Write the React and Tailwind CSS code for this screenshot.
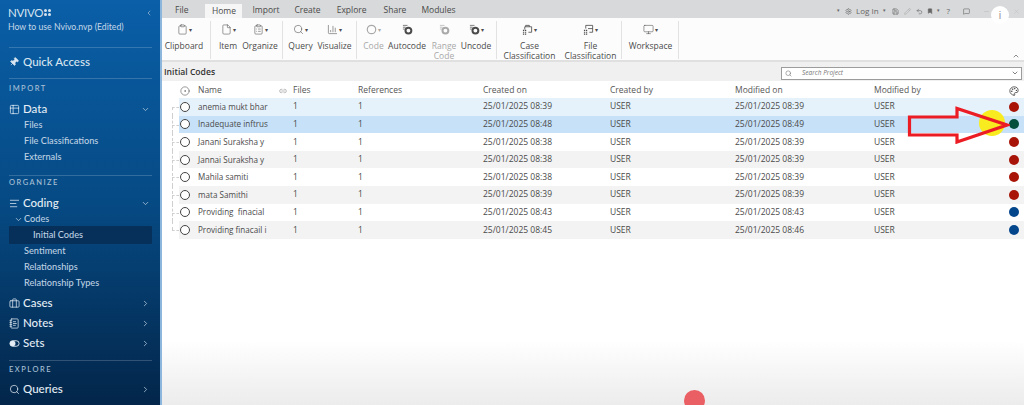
import React from "react";
import { Pin, Table2, ChevronDown, ChevronRight, ChevronLeft, ChevronUp, AlignLeft, Briefcase, NotebookText, Search, Clipboard, File, ClipboardList, BarChart3, Monitor, Palette, Link2, CircleDot, Settings, Save, Pencil, Undo2, Bookmark, MessageSquare, Minus, X } from "lucide-react";

const rows = [
  ["anemia mukt bhar", "25/01/2025 08:39", "25/01/2025 08:39", "bg-[#a81408]", "bg-[#e6f2fb]"],
  ["Inadequate inftrus", "25/01/2025 08:48", "25/01/2025 08:49", "bg-[#05503c]", "bg-[#c6e1f8]"],
  ["Janani Suraksha y", "25/01/2025 08:38", "25/01/2025 08:39", "bg-[#a81408]", "bg-white"],
  ["Jannai Suraksha y", "25/01/2025 08:38", "25/01/2025 08:39", "bg-[#a81408]", "bg-[#f3f3f3]"],
  ["Mahila samiti", "25/01/2025 08:38", "25/01/2025 08:39", "bg-[#a81408]", "bg-white"],
  ["mata Samithi", "25/01/2025 08:39", "25/01/2025 08:39", "bg-[#a81408]", "bg-[#f3f3f3]"],
  ["Providing  finacial", "25/01/2025 08:43", "25/01/2025 08:43", "bg-[#04468c]", "bg-white"],
  ["Providing finacail i", "25/01/2025 08:45", "25/01/2025 08:46", "bg-[#04468c]", "bg-[#f3f3f3]"],
];

const grid = "grid grid-cols-[19px_95px_65px_125px_127px_125px_139px_135px_14px] items-center";

const IconCircle = ({ size = 11 }) => (
  <svg width={size} height={size} viewBox="0 0 12 12" fill="none" stroke="currentColor" strokeWidth="1.3"><circle cx="6" cy="6" r="4.6" /></svg>
);
const IconStack = ({ size = 11 }) => (
  <svg width={size} height={size} viewBox="0 0 12 12" fill="none">
    <path d="M1 1.5H6M1 3.5H4M1 5.5H3" stroke="currentColor" strokeWidth="1" opacity="0.75" />
    <circle cx="7" cy="7.2" r="3.2" stroke="currentColor" strokeWidth="2.2" />
  </svg>
);
const IconCase = ({ size = 12 }) => (
  <svg width={size} height={size} viewBox="0 0 12 12" fill="none" stroke="currentColor" strokeWidth="0.9">
    <path d="M4 3V1.5H8V3M3 6V3H10.5V9H7" />
    <path d="M1 7H5M1 9H5M1 11H5" strokeDasharray="1.4 0.8" strokeWidth="1.2" />
  </svg>
);
const IconFileClass = ({ size = 12 }) => (
  <svg width={size} height={size} viewBox="0 0 12 12" fill="none" stroke="currentColor" strokeWidth="0.9">
    <path d="M3 5V1.5H10.5V9H7M5.5 5H10.5" />
    <path d="M1 7H5M1 9H5M1 11H5" strokeDasharray="1.4 0.8" strokeWidth="1.2" />
  </svg>
);
const IconSets = ({ size = 11, className = "" }) => (
  <svg width={size} height={size} viewBox="0 0 12 12" fill="none" className={className}>
    <rect x="1" y="3" width="10" height="6" rx="3" stroke="currentColor" strokeWidth="1" />
    <circle cx="4" cy="6" r="3" fill="currentColor" />
  </svg>
);

function Main({ icon: I, label, chevron = "right", tight }) {
  return (
    <div className={`flex items-center h-5 pl-[9px] pr-[10px] text-[11.5px] font-medium text-[#e4edf5] ${tight ? "-mb-[2px]" : ""}`}>
      <I size={11} strokeWidth={1.6} className="mr-[3px] shrink-0" />
      <span className="flex-1 whitespace-nowrap">{label}</span>
      {chevron === "right" ? <ChevronRight size={9} strokeWidth={2} className="text-[#b8cde0]" /> : <ChevronDown size={9} strokeWidth={2} className="text-[#b8cde0]" />}
    </div>
  );
}

function Sub({ children, className = "" }) {
  return <div className={`h-4 flex items-center pl-6 text-[9.2px] font-medium text-[#bed0e2] whitespace-nowrap ${className}`}>{children}</div>;
}

function Section({ children, className = "" }) {
  return <div className={`ml-[9px] mr-2 border-t border-[#ffffff2e] text-[7.5px] font-medium tracking-[0.2em] text-[#a9c0d6] ${className}`}>{children}</div>;
}

function Rb({ icon: I, w, lines, muted, caret = true, stroke = 1.2 }) {
  return (
    <div className={`flex flex-col items-center shrink-0 whitespace-nowrap pt-[2px] ${muted ? "text-[#a9a9a9]" : "text-[#4b4b4b]"}`} style={{ width: w }}>
      <div className="h-[13px] flex items-center justify-center">
        <I size={11} strokeWidth={stroke} />
        {caret && <span className="text-[6px] ml-px leading-none">▾</span>}
      </div>
      <div className="mt-[5px] text-[8.5px] leading-[10px] text-center">
        {lines.map((l) => <div key={l}>{l}</div>)}
      </div>
    </div>
  );
}

const Div = () => <div className="w-px h-[38px] bg-[#e2e2e2] shrink-0" />;
const Gap = ({ className }) => <div className={`shrink-0 ${className}`} />;

export default function App() {
  return (
    <div className="relative flex w-[1024px] h-[405px] overflow-hidden font-['Open_Sans',sans-serif] bg-white">
      {/* Sidebar */}
      <aside className="w-[160px] h-full shrink-0 border-r-2 border-[#8db6dc] box-content bg-gradient-to-b from-[#0a5fa8] via-[#064a84] to-[#03264a] font-['Lato',sans-serif] overflow-hidden">
        <div className="flex items-center justify-between h-[24px] pl-[8px] pr-[7px] pt-[1px] text-[#d5e3f0]">
          <div className="flex items-center text-[11.5px] leading-none tracking-tight">
            NVIVO
            <span className="ml-[1px] grid grid-cols-2 gap-[1px]">
              <i className="w-[3px] h-[3px] bg-[#d5e3f0] rounded-full" /><i className="w-[3px] h-[3px] bg-[#d5e3f0] rounded-full" />
              <i className="w-[3px] h-[3px] bg-[#d5e3f0] rounded-full" /><i className="w-[3px] h-[3px] bg-[#d5e3f0] rounded-full" />
            </span>
          </div>
          <ChevronLeft size={8} strokeWidth={2} className="text-[#a9c0d6]" />
        </div>
        <div className="pl-[8px] h-[6px] text-[8.7px] leading-[6px] text-[#c6d7e8] whitespace-nowrap">How to use Nvivo.nvp (Edited)</div>
        <div className="mt-[17px] mx-[9px] mr-2 border-t border-[#ffffff2e]" />
        <div className="flex items-center h-[24px] mt-[2px] pl-[9px] text-[11.5px] font-medium text-[#d8e5f0]">
          <Pin size={10} fill="currentColor" strokeWidth={1.5} className="mr-[4px] rotate-45" />Quick Access
        </div>
        <Section className="mt-[4px] pt-[4px] h-[21px]">IMPORT</Section>
        <Main icon={Table2} label="Data" chevron="down" tight />
        <Sub>Files</Sub>
        <Sub>File Classifications</Sub>
        <Sub>Externals</Sub>
        <Section className="mt-[10px] pt-[1px] h-[18px]">ORGANIZE</Section>
        <Main icon={AlignLeft} label="Coding" chevron="down" tight />
        <Sub className="pl-[14px]"><ChevronDown size={9} strokeWidth={2} className="mr-[1px]" />Codes</Sub>
        <div className="h-[18px] -my-px mx-[9px] mr-[8px] pl-[24px] flex items-center text-[9.2px] font-medium text-[#bed0e2] bg-[#06305a] rounded-[1px]">Initial Codes</div>
        <Sub>Sentiment</Sub>
        <Sub>Relationships</Sub>
        <Sub>Relationship Types</Sub>
        <div className="h-[2px]" />
        <Main icon={Briefcase} label="Cases" />
        <Main icon={NotebookText} label="Notes" />
        <Main icon={IconSets} label="Sets" />
        <Section className="mt-[7px] pt-[3px] h-[19px]">EXPLORE</Section>
        <Main icon={Search} label="Queries" />
      </aside>

      {/* Content */}
      <main className="flex-1 min-w-0 flex flex-col bg-gradient-to-b from-white from-[84%] to-[#ececec]">
        {/* Tabs */}
        <div className="h-[18px] shrink-0 bg-[#d8d9da] flex items-end text-[8.5px] text-[#4a4a4a]">
          <div className="flex items-end w-[420px] h-full">
            <span className="ml-[13px] mb-[1px]">File</span>
            <span className="ml-[17px] w-[37px] h-[14px] bg-[#f6f6f6] flex items-center justify-center">Home</span>
            <span className="ml-[10px] mb-[1px]">Import</span>
            <span className="ml-[15px] mb-[1px]">Create</span>
            <span className="ml-[16px] mb-[1px]">Explore</span>
            <span className="ml-[17px] mb-[1px]">Share</span>
            <span className="ml-[15px] mb-[1px]">Modules</span>
          </div>
          <div className="flex-1 h-full flex items-center justify-end pt-[4px] pr-[34px] text-[#666]">
            <span className="text-[5px]">▾</span>
            <Settings size={7} className="ml-[5px]" />
            <span className="text-[8px] ml-[4px]">Log In</span>
            <span className="text-[5px] ml-[4px]">▾</span>
            <Save size={7} className="ml-[6px]" />
            <Pencil size={7} className="ml-[5px] text-[#aaa]" />
            <Undo2 size={7} className="ml-[5px]" />
            <Bookmark size={6} fill="currentColor" className="ml-[4px]" />
            <span className="text-[5px] ml-[4px]">▾</span>
            <span className="text-[8px] ml-[7px]">?</span>
            <MessageSquare size={7} className="ml-[13px]" />
            <Minus size={7} className="ml-[13px] text-[#bbb]" />
          </div>
        </div>

        {/* Ribbon */}
        <div className="h-[42px] shrink-0 bg-[#fcfcfc] flex items-start pt-[3px] text-[8.5px]">
          <Rb icon={Clipboard} w={44} lines={["Clipboard"]} />
          <Gap className="w-[4px]" />
          <Div />
          <Gap className="w-[4px]" />
          <Rb icon={File} w={26} lines={["Item"]} />
          <Gap className="w-[1px]" />
          <Rb icon={ClipboardList} w={36} lines={["Organize"]} />
          <Gap className="w-[4px]" />
          <Div />
          <Gap className="w-[4px]" />
          <Rb icon={Search} w={27} lines={["Query"]} />
          <Gap className="w-[1px]" />
          <Rb icon={BarChart3} w={39} lines={["Visualize"]} />
          <Gap className="w-[2px]" />
          <Div />
          <Gap className="w-[4px]" />
          <Rb icon={IconCircle} w={25} lines={["Code"]} muted />
          <Rb icon={IconStack} w={42} lines={["Autocode"]} caret={false} />
          <Gap className="w-[2px]" />
          <Rb icon={IconStack} w={28} lines={["Range", "Code"]} muted caret={false} />
          <Gap className="w-[1px]" />
          <Rb icon={IconStack} w={34} lines={["Uncode"]} />
          <Gap className="w-[3px]" />
          <Div />
          <Gap className="w-[7px]" />
          <Rb icon={IconCase} w={51} lines={["Case", "Classification"]} />
          <Gap className="w-[10px]" />
          <Rb icon={IconFileClass} w={51} lines={["File", "Classification"]} />
          <Gap className="w-[5px]" />
          <Div />
          <Gap className="w-[6px]" />
          <Rb icon={Monitor} w={45} lines={["Workspace"]} />
          <Gap className="w-[5px]" />
          <Div />
          <ChevronUp size={8} strokeWidth={2} className="ml-auto mr-[4px] mt-[31px] text-[#555]" />
        </div>

        {/* Title bar */}
        <div className="h-[21px] shrink-0 border-t-2 border-[#e0e0e0] bg-[#f0f0f0] flex items-center justify-between pt-[2px] pl-[2px] pr-[2px]">
          <span className="text-[8.6px] font-semibold text-[#333]">Initial Codes</span>
          <div className="w-[241px] h-[13px] mt-[1px] bg-white border border-[#9c9c9c] flex items-center pl-[3px] pr-[2px] text-[#777]">
            <Search size={7} className="mr-[10px]" />
            <span className="flex-1 text-[6.5px] italic">Search Project</span>
            <ChevronDown size={8} strokeWidth={2} className="text-[#444]" />
          </div>
        </div>

        {/* Table */}
        <div className="pl-[17px] pt-[2px]">
          <div className={`${grid} h-[15px] text-[8.5px] text-[#555]`}>
            <CircleDot size={10} strokeWidth={1.3} className="text-[#444] ml-px" />
            <span className="flex justify-between items-center pr-[6px]">Name<Link2 size={8} className="text-[#999]" /></span>
            <span>Files</span>
            <span>References</span>
            <span>Created on</span>
            <span>Created by</span>
            <span>Modified on</span>
            <span>Modified by</span>
            <Palette size={10} strokeWidth={1.8} className="text-[#333]" />
          </div>
          <div className="flex flex-col">
            {rows.map((r, i) => (
              <div key={r[0]} className="relative">
                <div className={`${grid} h-[17.6px] text-[8.5px] text-[#4a4a4a] ${r[4]} whitespace-pre`}>
                  <span className="ml-px w-[10px] h-[10px] rounded-full border-[1.3px] border-[#444] bg-white" />
                  <span className="text-[8.1px]">{r[0]}</span>
                  <span>1</span>
                  <span>1</span>
                  <span>{r[1]}</span>
                  <span>USER</span>
                  <span>{r[2]}</span>
                  <span>USER</span>
                  <span className={`w-[10px] h-[10px] rounded-full ${r[3]}`} />
                </div>
                <span className="absolute left-[-7px] top-[9px] w-[7px] border-b border-dashed border-[#cfcfcf]" />
                <span className={`absolute left-[-7px] border-l border-dashed border-[#cfcfcf] ${i === 0 ? "top-[9px] h-[9px]" : i === 7 ? "top-0 h-[9px]" : "top-0 h-[17.6px]"}`} />
              </div>
            ))}
          </div>
        </div>
      </main>

      {/* Overlays */}
      <span className="absolute left-[979px] top-[110px] w-[26px] h-[26px] rounded-full bg-[#f8ec20]" />
      <svg className="absolute left-[905px] top-[106px]" width="105" height="38" viewBox="0 0 105 38" fill="none">
        <path d="M4.5 11H52V2.5L102 19L52 36V29H4.5Z" stroke="#ec1c24" strokeWidth="3.2" />
      </svg>
      <span className="absolute left-[991px] top-[6px] w-[18px] h-[18px] rounded-full bg-white flex items-center justify-center text-[#9a9a9a] font-['Liberation_Sans',sans-serif] text-[11px] leading-none">i</span>
      <span className="absolute left-[1013px] top-[8px] text-[#c5c5c5]"><X size={7} /></span>
      <span className="absolute left-[684px] top-[390px] w-[21px] h-[21px] rounded-full bg-[#ea5f63]" />
    </div>
  );
}
